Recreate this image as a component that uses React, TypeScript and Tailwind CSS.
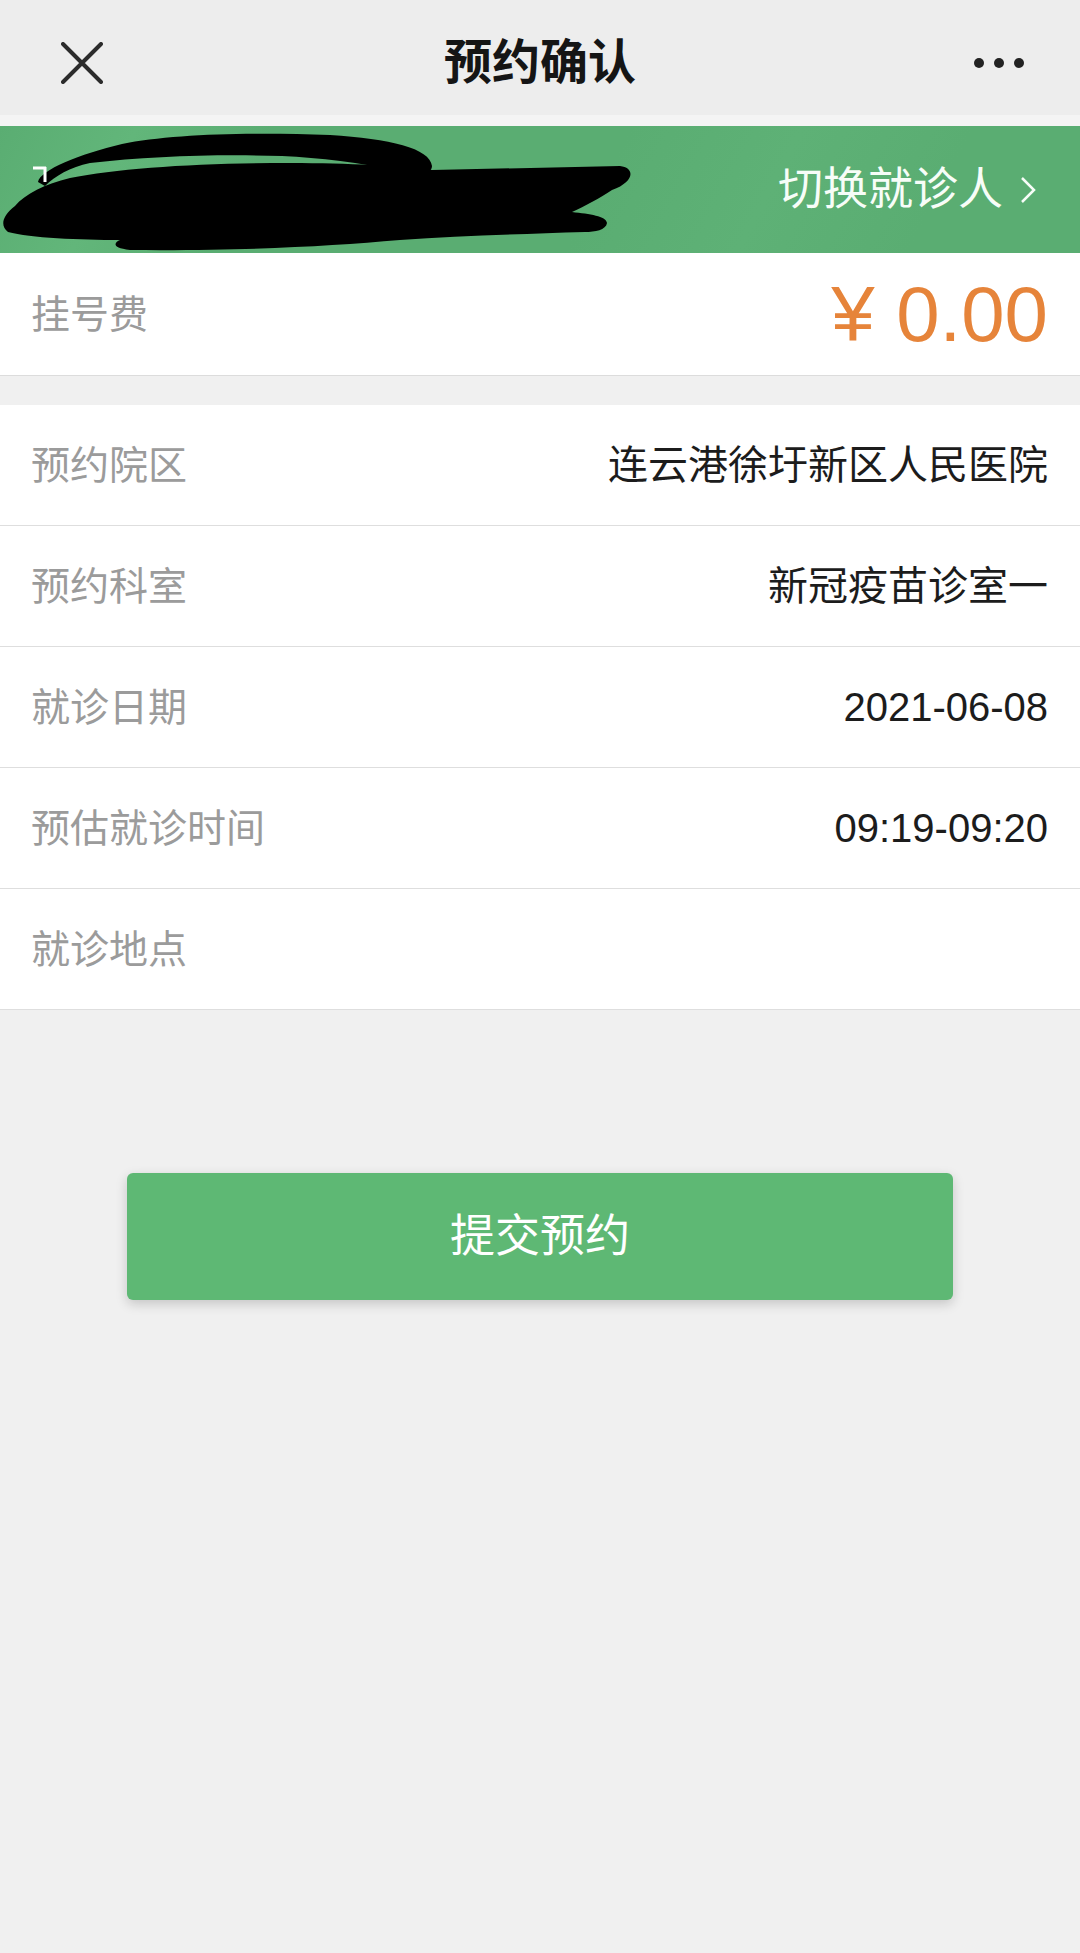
import React from 'react';

const rows = [
  { label: '预约院区', value: '连云港徐圩新区人民医院' },
  { label: '预约科室', value: '新冠疫苗诊室一' },
  { label: '就诊日期', value: '2021-06-08' },
  { label: '预估就诊时间', value: '09:19-09:20' },
  { label: '就诊地点', value: '' },
];

function Scribble() {
  // 遮挡姓名的手绘涂抹
  return (
    <svg className="absolute left-0 top-0" width="640" height="127" viewBox="0 0 640 127">
      <path
        d="M15 80 C25 68 45 58 70 52 C120 42 200 37 290 37 C350 37 400 40 432 44 L620 40 C636 42 634 56 612 64 C600 72 585 80 572 86 C590 88 606 90 607 97 C606 104 595 106 585 106 C520 108 460 110 400 114 C330 120 250 125 130 124 C110 122 115 116 120 114 C80 114 30 112 8 106 C0 100 2 90 15 80 Z"
        fill="#000"
      />
      <path
        d="M38 56 C40 44 80 28 122 18 C170 8 250 6 330 9 C390 13 430 22 432 40 C432 48 420 50 400 46 C360 36 320 32 282 30 C220 28 150 30 90 37 C70 41 55 50 45 60 Z"
        fill="#000"
      />
      <path d="M33 42 L46 42 M45 41 L45 56" fill="none" stroke="#fff" strokeWidth="3" />
    </svg>
  );
}

export default function App() {
  return (
    <div className="w-[1080px] min-h-[1953px] bg-[#f0f0f0] font-['Liberation_Sans','Noto_Sans_CJK_SC',sans-serif]">
      {/* 顶部导航 */}
      <div className="grid h-[115px] grid-cols-[1fr_auto_1fr] items-center bg-[#ededed] pt-[10px]">
        <div className="pl-[61px]">
          <svg width="42" height="42" viewBox="0 0 42 42">
            <path d="M2 2 L40 40 M40 2 L2 40" stroke="#2b2b2b" strokeWidth="4" strokeLinecap="round" />
          </svg>
        </div>
        <div className="text-[48px] font-bold leading-none text-[#151515]">预约确认</div>
        <div className="flex justify-end gap-[10px] pr-[56px]">
          <span className="h-[10px] w-[10px] rounded-full bg-[#222]" />
          <span className="h-[10px] w-[10px] rounded-full bg-[#222]" />
          <span className="h-[10px] w-[10px] rounded-full bg-[#222]" />
        </div>
      </div>
      <div className="h-[11px] bg-[#f4f4f4]" />

      {/* 就诊人 */}
      <div className="relative flex h-[127px] items-center justify-end bg-[linear-gradient(118deg,#5aad72_0%,#62b67a_12%,#5aad72_24%,#5aad72_55%,#5eb176_70%,#5aad72_85%)] pr-[44px]">
        <Scribble />
        <span className="text-[45px] leading-none text-[#f7fdf8]">切换就诊人</span>
        <svg className="ml-[17px]" width="16" height="28" viewBox="0 0 16 28">
          <path d="M2 2 L14 14 L2 26" fill="none" stroke="#f7fdf8" strokeWidth="2.5" />
        </svg>
      </div>

      {/* 挂号费 */}
      <div className="flex h-[123px] items-center justify-between border-b border-[#dcdcdc] bg-white pl-[31px] pr-[32px]">
        <span className="text-[39px] leading-none text-[#9b9b9b]">挂号费</span>
        <span className="text-[78px] leading-none text-[#e6843a]">¥ 0.00</span>
      </div>

      <div className="h-[29px]" />

      {/* 预约信息 */}
      <div className="bg-white">
        {rows.map((row) => (
          <div
            key={row.label}
            className="flex h-[121px] items-center justify-between border-b border-[#dedede] pl-[31px] pr-[32px]"
          >
            <span className="text-[39px] leading-none text-[#9b9b9b]">{row.label}</span>
            <span className="text-[40px] leading-none text-[#1c1c1c]">{row.value}</span>
          </div>
        ))}
      </div>

      <div className="pt-[163px]">
        <button className="ml-[127px] flex h-[127px] w-[826px] items-center justify-center rounded-[6px] bg-[#5eb874] text-[45px] leading-none text-white shadow-[0_4px_12px_rgba(0,0,0,0.18)]">
          提交预约
        </button>
      </div>
    </div>
  );
}
